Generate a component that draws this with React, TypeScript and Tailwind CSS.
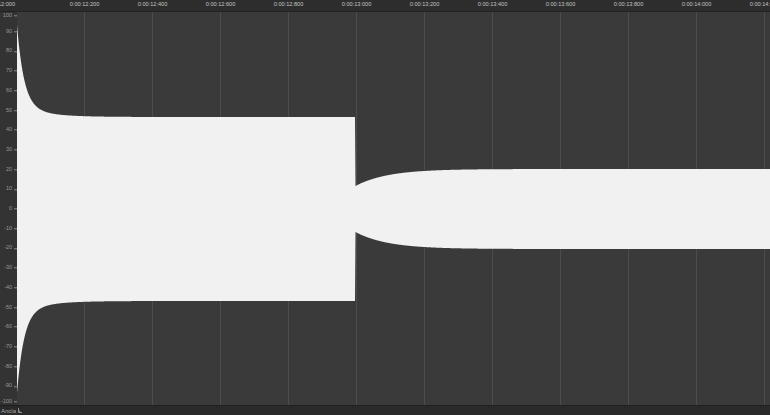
const timeLabels = [
  "0:00:12:200",
  "0:00:12:400",
  "0:00:12:600",
  "0:00:12:800",
  "0:00:13:000",
  "0:00:13:200",
  "0:00:13:400",
  "0:00:13:600",
  "0:00:13:800",
  "0:00:14:000",
  "0:00:14:200",
];

const levels = [100, 90, 80, 70, 60, 50, 40, 30, 20, 10, 0, -10, -20, -30, -40, -50, -60, -70, -80, -90, -100];

const PLOT_W = 753;
const PLOT_H = 393;
const MID = 197;
const STEP = 68;
const FIRST_LINE = 67.5;

function amplitude(x: number) {
  if (x < 338.5) return 92 + 80 * Math.exp(-x / 7) + 12 * Math.exp(-x / 25);
  return 40 - 17 * Math.exp(-(x - 338.5) / 32);
}

function wavePath() {
  const top: string[] = [];
  const bottom: string[] = [];
  for (let x = 0; x <= PLOT_W; x += 0.5) {
    const a = amplitude(x);
    top.push(`${x},${(MID - a).toFixed(2)}`);
    bottom.unshift(`${x},${(MID + a).toFixed(2)}`);
  }
  return `M0,${MID} L${top.join(" L")} L${bottom.join(" L")} Z`;
}

function levelY(v: number) {
  const y = 209 - v * 1.97;
  return Math.min(Math.max(y, 16), 402);
}

export default function App() {
  const d = wavePath();
  return (
    <div
      className="flex h-[415px] w-[770px] flex-col overflow-hidden bg-[#3a3a3a]"
      style={{ fontFamily: '"Liberation Sans", Arial, sans-serif' }}
    >
      {/* time ruler */}
      <div className="relative h-[12px] shrink-0 overflow-hidden border-b border-[#222] bg-[#2d2d2d] text-[5.6px] leading-none text-[#c4c4c4]">
        <span className="absolute top-[2px] right-[755px] whitespace-nowrap">0:00:12:000</span>
        {timeLabels.map((t, i) => (
          <span
            key={t}
            className="absolute top-[2px] -translate-x-1/2 whitespace-nowrap"
            style={{ left: 84.5 + i * STEP }}
          >
            {t}
          </span>
        ))}
      </div>

      <div className="flex min-h-0 flex-1">
        {/* level axis */}
        <div className="relative w-[17px] shrink-0 bg-[#333333] text-[5.4px] leading-none text-[#9a9a9a]">
          {levels.map((v) => (
            <div
              key={v}
              className="absolute right-0 flex -translate-y-1/2 items-center gap-[2px]"
              style={{ top: levelY(v) - 12 }}
            >
              <span>{v}</span>
              <span className="h-px w-[3px] bg-[#8a8a8a]" />
            </div>
          ))}
        </div>

        {/* waveform */}
        <div className="relative flex-1 bg-[#3a3a3a]">
          <svg width={PLOT_W} height={PLOT_H} viewBox={`0 0 ${PLOT_W} ${PLOT_H}`} className="block">
            {timeLabels.map((t, i) => (
              <line
                key={t}
                x1={FIRST_LINE + i * STEP}
                x2={FIRST_LINE + i * STEP}
                y1={0}
                y2={PLOT_H}
                stroke="#4c4c4c"
                strokeWidth={1}
              />
            ))}
            <path d={d} fill="#f1f1f1" />
          </svg>
        </div>
      </div>

      {/* footer */}
      <div className="flex h-[10px] shrink-0 items-center gap-[2px] border-t border-[#1f1f1f] bg-[#2a2a2a] text-[6px] leading-none text-[#a8a8a8]">
        <span className="pl-[1px]">Ancla</span>
        <svg width="4" height="5" viewBox="0 0 4 5">
          <path d="M0.5 0 V4.5 H4 M0.5 2 L2.5 4.5" stroke="#b0b0b0" strokeWidth="0.7" fill="none" />
        </svg>
      </div>
    </div>
  );
}
